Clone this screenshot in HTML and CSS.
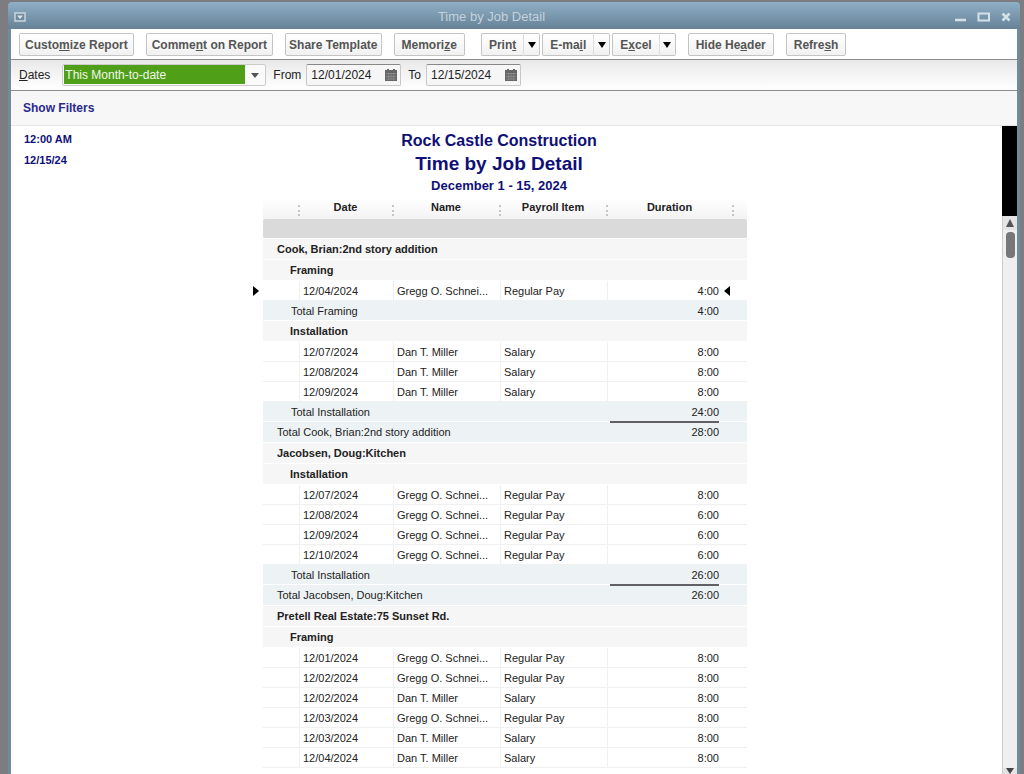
FILE: index.html
```
<!DOCTYPE html>
<html lang="en">
<head>
    <meta charset="UTF-8">
    <title>Time by Job Detail</title>
    <link rel="stylesheet" href="styles.css">
</head>
<body>
<div class="window">
    <header class="titlebar">
        <svg class="win-menu" width="12" height="10" viewBox="0 0 12 10"><rect x="1" y="1" width="10" height="8" fill="#6f8ba0" stroke="#c9d5de" stroke-width="1.5"/><path d="M3 3.5h6L6 7z" fill="#dde6ec"/></svg>
        <span class="title">Time by Job Detail</span>
        <div class="win-buttons">
            <svg width="12" height="10" viewBox="0 0 12 10"><path d="M0 8h11" stroke="#d5e0e8" stroke-width="2.5"/></svg>
            <svg width="14" height="10" viewBox="0 0 14 10"><path d="M1.5 1.5h10.500v7h-10.500z" fill="none" stroke="#d5e0e8" stroke-width="2"/></svg>
            <svg width="10" height="10" viewBox="0 0 10 10"><path d="M1.500 1.500l7 7M8.500 1.500l-7 7" stroke="#d5e0e8" stroke-width="2.500"/></svg>
        </div>
    </header>

    <div class="toolbar">
        <button class="btn tight">Custo<u>m</u>ize Report</button>
        <button class="btn tight">Comme<u>n</u>t on Report</button>
        <button class="btn tighter">Share Template</button>
        <button class="btn">Memori<u>z</u>e</button>
        <div class="split-group">
            <div class="split"><button class="btn">Prin<u>t</u></button><button class="btn arrow" aria-label="Print options"><svg width="8" height="6" viewBox="0 0 8 6"><path d="M0 0h8L4 6z"/></svg></button></div>
            <div class="split"><button class="btn">E-ma<u>i</u>l</button><button class="btn arrow" aria-label="E-mail options"><svg width="8" height="6" viewBox="0 0 8 6"><path d="M0 0h8L4 6z"/></svg></button></div>
            <div class="split"><button class="btn">E<u>x</u>cel</button><button class="btn arrow" aria-label="Excel options"><svg width="8" height="6" viewBox="0 0 8 6"><path d="M0 0h8L4 6z"/></svg></button></div>
        </div>
        <button class="btn">Hide He<u>a</u>der</button>
        <button class="btn">Refre<u>s</u>h</button>
    </div>

    <div class="dates">
        <label class="dates-label" for="range"><u>D</u>ates</label>
        <div class="select-box">
            <select id="range"><option>This Month-to-date</option></select>
            <svg width="8" height="5" viewBox="0 0 8 5"><path d="M0 0h8L4 5z" fill="#555"/></svg>
        </div>
        <label for="from">From</label>
        <div class="date-box">
            <input type="text" id="from" value="12/01/2024">
            <svg width="12" height="12" viewBox="0 0 12 12"><path d="M0 1h2V0h2v1h4V0h2v1h2v11H0z" fill="#666"/><path d="M1 4.500h10M1 7.500h10M1 10h10M3.500 4v7M6 4v7M8.500 4v7" stroke="#999" stroke-width=".6"/></svg>
        </div>
        <label for="to">To</label>
        <div class="date-box">
            <input type="text" id="to" value="12/15/2024">
            <svg width="12" height="12" viewBox="0 0 12 12"><path d="M0 1h2V0h2v1h4V0h2v1h2v11H0z" fill="#666"/><path d="M1 4.500h10M1 7.500h10M1 10h10M3.500 4v7M6 4v7M8.500 4v7" stroke="#999" stroke-width=".6"/></svg>
        </div>
    </div>

    <div class="filters"><a href="#">Show Filters</a></div>

    <div class="content">
        <main class="report">
            <div class="report-head">
                <div class="stamp">
                    <div>12:00 AM</div>
                    <div>12/15/24</div>
                </div>
                <div class="report-title">
                    <h2>Rock Castle Construction</h2>
                    <h1>Time by Job Detail</h1>
                    <h3>December 1 - 15, 2024</h3>
                </div>
            </div>
            <table>
                <colgroup>
                    <col class="c-gutter"><col class="c-indent"><col class="c-date"><col class="c-name"><col class="c-item"><col class="c-duration"><col class="c-end">
                </colgroup>
                <thead>
                    <tr><td></td><th class="dots"></th><th class="dots">Date</th><th class="dots">Name</th><th class="dots">Payroll Item</th><th class="dots">Duration</th><th></th></tr>
                    <tr class="band"><td></td><td colspan="6"></td></tr>
                </thead>
                <tbody>
                    <tr class="group job"><td></td><th colspan="6">Cook, Brian:2nd story addition</th></tr>
                    <tr class="group"><td></td><th colspan="6">Framing</th></tr>
                    <tr class="row"><td class="marker"><svg width="6" height="10" viewBox="0 0 6 10"><path d="M0 0l6 5-6 5z"/></svg></td><td></td><td>12/04/2024</td><td>Gregg O. Schnei...</td><td>Regular Pay</td><td class="num">4:00</td><td class="marker-end"><svg width="6" height="10" viewBox="0 0 6 10"><path d="M6 0L0 5l6 5z"/></svg></td></tr>
                    <tr class="total"><td></td><td colspan="4">Total Framing</td><td class="num">4:00</td><td></td></tr>
                    <tr class="group"><td></td><th colspan="6">Installation</th></tr>
                    <tr class="row"><td></td><td></td><td>12/07/2024</td><td>Dan T. Miller</td><td>Salary</td><td class="num">8:00</td><td></td></tr>
                    <tr class="row"><td></td><td></td><td>12/08/2024</td><td>Dan T. Miller</td><td>Salary</td><td class="num">8:00</td><td></td></tr>
                    <tr class="row"><td></td><td></td><td>12/09/2024</td><td>Dan T. Miller</td><td>Salary</td><td class="num">8:00</td><td></td></tr>
                    <tr class="total"><td></td><td colspan="4">Total Installation</td><td class="num">24:00</td><td></td></tr>
                    <tr class="total job"><td></td><td colspan="4">Total Cook, Brian:2nd story addition</td><td class="num">28:00</td><td></td></tr>
                </tbody>
                <tbody>
                    <tr class="group job"><td></td><th colspan="6">Jacobsen, Doug:Kitchen</th></tr>
                    <tr class="group"><td></td><th colspan="6">Installation</th></tr>
                    <tr class="row"><td></td><td></td><td>12/07/2024</td><td>Gregg O. Schnei...</td><td>Regular Pay</td><td class="num">8:00</td><td></td></tr>
                    <tr class="row"><td></td><td></td><td>12/08/2024</td><td>Gregg O. Schnei...</td><td>Regular Pay</td><td class="num">6:00</td><td></td></tr>
                    <tr class="row"><td></td><td></td><td>12/09/2024</td><td>Gregg O. Schnei...</td><td>Regular Pay</td><td class="num">6:00</td><td></td></tr>
                    <tr class="row"><td></td><td></td><td>12/10/2024</td><td>Gregg O. Schnei...</td><td>Regular Pay</td><td class="num">6:00</td><td></td></tr>
                    <tr class="total"><td></td><td colspan="4">Total Installation</td><td class="num">26:00</td><td></td></tr>
                    <tr class="total job"><td></td><td colspan="4">Total Jacobsen, Doug:Kitchen</td><td class="num">26:00</td><td></td></tr>
                </tbody>
                <tbody>
                    <tr class="group job"><td></td><th colspan="6">Pretell Real Estate:75 Sunset Rd.</th></tr>
                    <tr class="group"><td></td><th colspan="6">Framing</th></tr>
                    <tr class="row"><td></td><td></td><td>12/01/2024</td><td>Gregg O. Schnei...</td><td>Regular Pay</td><td class="num">8:00</td><td></td></tr>
                    <tr class="row"><td></td><td></td><td>12/02/2024</td><td>Gregg O. Schnei...</td><td>Regular Pay</td><td class="num">8:00</td><td></td></tr>
                    <tr class="row"><td></td><td></td><td>12/02/2024</td><td>Dan T. Miller</td><td>Salary</td><td class="num">8:00</td><td></td></tr>
                    <tr class="row"><td></td><td></td><td>12/03/2024</td><td>Gregg O. Schnei...</td><td>Regular Pay</td><td class="num">8:00</td><td></td></tr>
                    <tr class="row"><td></td><td></td><td>12/03/2024</td><td>Dan T. Miller</td><td>Salary</td><td class="num">8:00</td><td></td></tr>
                    <tr class="row"><td></td><td></td><td>12/04/2024</td><td>Dan T. Miller</td><td>Salary</td><td class="num">8:00</td><td></td></tr>
                </tbody>
            </table>
        </main>
        <div class="side">
            <div class="blank"></div>
            <div class="scrollbar">
                <div class="scroll-end"><svg width="8" height="8" viewBox="0 0 8 8"><path d="M4 0l4 8H0z" fill="#555"/></svg></div>
                <div class="thumb"></div>
                <div class="scroll-end bottom"><svg width="8" height="6" viewBox="0 0 8 6"><path d="M0 0h8L4 6z" fill="#444"/></svg></div>
            </div>
        </div>
    </div>
</div>
</body>
</html>
```
FILE: styles.css
```
* { box-sizing: border-box; }
body { margin: 0; height: 100vh; overflow: hidden; background: #7d7c81; font-family: "Liberation Sans", Arial, sans-serif; font-size: 12px; color: #222; padding: 2px 4px 0 8px; display: flex; }
h1, h2, h3 { margin: 0; }

.window { flex: 1; display: flex; flex-direction: column; min-width: 0; background: #6f8b9c; border-radius: 4px 4px 0 0; padding: 0 3px; overflow: hidden; }
.titlebar { flex: none; display: grid; grid-template-columns: 1fr auto 1fr; align-items: center; height: 27px; margin: 0 -3px; padding: 2px 9px 0 6px; background: linear-gradient(#8fafc6, #668297); }
.title { color: #c3d2dd; font-size: 13px; margin-right: 42px; }
.win-buttons { display: flex; justify-content: flex-end; gap: 10px; }

.toolbar { flex: none; display: flex; gap: 12px; padding: 4px 8px 3px; background: #fff; border-bottom: 1px solid #8c8c8c; }
.btn { height: 23px; padding: 0 7px; border: 1px solid #c4c4c4; border-radius: 2px; background: linear-gradient(#fff, #f1f1f1); color: #555; font-family: inherit; font-size: 12px; font-weight: bold; white-space: nowrap; }
.btn.tight { padding: 0 5px; }
.btn.tighter { padding: 0 3px; }
.split-group { display: flex; gap: 2px; margin-left: 4px; }
.split { display: flex; }
.split .btn:first-child { border-right: 0; border-radius: 2px 0 0 2px; }
.split .arrow { width: 17px; padding: 0; border-left-color: #ddd; border-radius: 0 2px 2px 0; }
.arrow svg { display: block; margin: auto; }

.dates { flex: none; display: flex; align-items: center; gap: 5px; height: 31px; padding: 0 8px; background: linear-gradient(#e9e9e9, #fff); border-bottom: 1px solid #8c8c8c; }
.dates-label { margin-right: 7px; }
.select-box { position: relative; width: 204px; margin-right: 2px; }
.select-box select { display: block; width: 100%; height: 22px; padding: 0 2px; appearance: none; border: 1px solid #ccc; border-radius: 2px; background: linear-gradient(#4f9f18, #4f9f18) 1px 0 / 181px 19px no-repeat #fafafa; color: #f2f8ec; font-family: inherit; font-size: 12px; }
.select-box svg { position: absolute; right: 7px; top: 9px; }
.date-box { position: relative; width: 95px; margin-right: 2px; }
.date-box input { display: block; width: 100%; height: 22px; padding: 0 4px; border: 1px solid #c8c8c8; border-top-color: #888; border-radius: 2px; background: #f6f6f6; color: #222; font-family: inherit; font-size: 12px; }
.date-box svg { position: absolute; right: 4px; top: 5px; }

.filters { flex: none; height: 35px; padding: 0 12px; border-bottom: 1px solid #e6e6e6; background: #f7f7f7; line-height: 34px; }
.filters a { color: #2a2a8c; font-weight: bold; text-decoration: none; }

.content { flex: 1; display: flex; min-height: 0; background: #fff; }
.report { flex: 1; overflow: hidden; padding: 4px 28px 0 13px; }
.report-head { display: grid; grid-template-columns: 1fr auto 1fr; color: #0f0f78; }
.stamp { font-size: 11px; font-weight: bold; line-height: 21px; margin-top: -1px; }
.report-title { text-align: center; }
.report-title h2 { font-size: 16px; line-height: 22px; }
.report-title h1 { font-size: 19px; line-height: 24px; }
.report-title h3 { font-size: 13px; line-height: 20px; }

table { width: 496px; margin: 3px auto 0; border-collapse: separate; border-spacing: 0; table-layout: fixed; font-size: 11px; color: #222; }
.c-gutter { width: 12px; }
.c-indent { width: 37px; }
.c-date { width: 94px; }
.c-name, .c-item { width: 107px; }
.c-duration { width: 126px; }
.c-end { width: 13px; }
td, th { height: 20px; padding: 0; line-height: 16px; white-space: nowrap; }
thead th { position: relative; padding: 0 3px 4px 0; background: linear-gradient(#fff, #f3f3f3); }
.dots::after { content: ""; position: absolute; right: 0; top: 6px; height: 11px; border-right: 2px dotted #c6c6c6; }
.band td + td { border-bottom: 1px solid #fff; background: #dadada; border-radius: 2px; }

.group th { padding-left: 27px; border-bottom: 1px solid #fff; background: #f6f6f6; text-align: left; }
.group.job th { padding-left: 14px; }
.group td, .group th, .total.job td { height: 21px; }
.row td + td { padding-left: 3px; border-right: 1px solid #f0f0f0; border-bottom: 1px solid #f0f0f0; }
.row td.num + td { padding: 0; border-right: 0; }
.row td.num { border-right: 0; }
.total td + td { border-bottom: 1px solid #fff; background: #edf3f5; }
.total td:nth-child(2) { padding-left: 28px; }
.total.job td:nth-child(2) { padding-left: 14px; }
td.num { position: relative; padding-right: 15px; text-align: right; }
.total.job .num::before { content: ""; position: absolute; top: -1px; left: 2px; right: 15px; height: 2px; background: #606066; }
.marker svg { display: block; margin-left: 2px; }
td.marker-end { position: relative; }
.marker-end svg { position: absolute; left: -10px; top: 5px; }

.side { width: 15px; display: flex; flex-direction: column; }
.blank { height: 90px; background: #000; }
.scrollbar { flex: 1; display: flex; flex-direction: column; align-items: center; border-left: 1px solid #ccc; background: #f0efef; }
.scroll-end { display: flex; justify-content: center; align-items: center; width: 100%; height: 14px; background: #e4e4e4; }
.scroll-end.bottom { height: 6px; margin-top: auto; }
.thumb { width: 9px; height: 26px; margin-top: 2px; border-radius: 4px; background: #777; }
```
